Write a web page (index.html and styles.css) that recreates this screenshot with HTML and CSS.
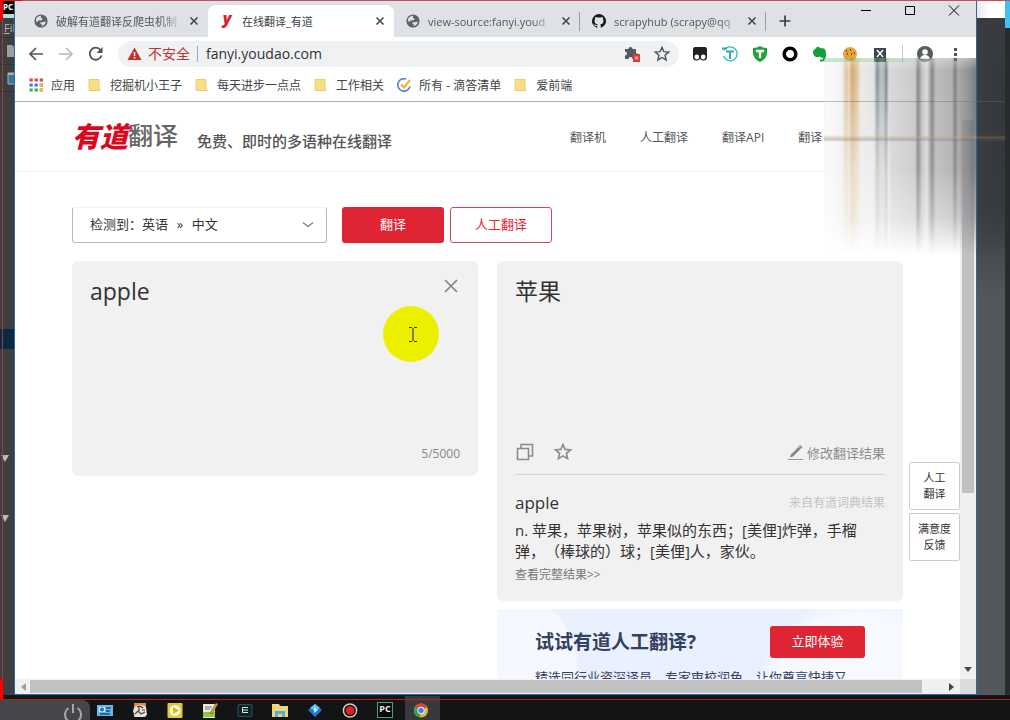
FILE: index.html
```html
<!DOCTYPE html>
<html lang="zh-CN">
<head>
<meta charset="utf-8">
<title>在线翻译_有道</title>
<link rel="stylesheet" href="styles.css">
</head>
<body>
<svg class="defs" width="0" height="0" aria-hidden="true">
  <symbol id="globe" viewBox="0 0 14 14"><circle cx="7" cy="7" r="6.6" fill="#5f6368"/><path d="M2 5.2C3 2.800 5 1.800 7 1.800L6.800 3.800 8.800 4.800 7.200 6.600 4.600 6.200 3.800 8 2.200 7.200ZM8.200 8.200 11.800 7.400C11.600 9.800 10 11.600 7.600 12.100L7.800 10.300 6.200 9.600 6.600 8.200Z" fill="#dee1e6"/></symbol>
  <symbol id="close" viewBox="0 0 10 10"><path d="M1.500 1.500 8.500 8.500M8.500 1.500 1.500 8.500" stroke="currentColor" stroke-width="1.600" fill="none"/></symbol>
  <symbol id="star" viewBox="0 0 18 18"><path d="M9 1.500 11.100 6.400 16.500 6.900 12.400 10.400 13.600 15.700 9 12.900 4.400 15.700 5.600 10.400 1.500 6.900 6.900 6.400Z" fill="none" stroke="currentColor" stroke-width="1.600"/></symbol>
  <symbol id="folder" viewBox="0 0 14 14"><path d="M1 1h10v10h1v2H1Z" fill="#f8df82"/><path d="M1 1.500h10v8.500l1 .5v2H1Z" fill="none" stroke="#e3c768" stroke-width=".8"/></symbol>
</svg>

<div class="desktop">
  <aside class="ide ide-left">
    <div class="ide-badge">PC</div>
    <div class="ide-menu"><u>F</u>il</div>
    <div class="ide-tool"><svg width="10" height="13" viewBox="0 0 10 13"><path d="M0 0h5l4 4v8H0Z" fill="#9b9fa2"/></svg></div>
    <div class="ide-tool"><svg width="9" height="13" viewBox="0 0 9 13"><path d="M1 1h8v11H1Z" fill="#35779a" stroke="#a7b0b5"/><path d="M1 1h8v2H1Z" fill="#a7b0b5"/></svg></div>
    <div class="ide-tree">
      <div class="ide-selected"></div>
      <i class="ide-arrow"></i>
      <i class="ide-arrow"></i>
    </div>
  </aside>

  <div class="browser">
    <header class="tabs">
      <div class="tab"><svg class="favicon"><use href="#globe"/></svg><span class="tab-title">破解有道翻译反爬虫机制</span><button class="tab-close" aria-label="关闭"><svg><use href="#close"/></svg></button></div>
      <div class="tab active"><span class="favicon y-icon">y</span><span class="tab-title">在线翻译_有道</span><button class="tab-close" aria-label="关闭"><svg><use href="#close"/></svg></button></div>
      <div class="tab divided"><svg class="favicon"><use href="#globe"/></svg><span class="tab-title">view-source:fanyi.youd</span><button class="tab-close" aria-label="关闭"><svg><use href="#close"/></svg></button></div>
      <div class="tab divided"><svg class="favicon" viewBox="0 0 16 16"><path fill="#17191c" d="M8 0a8 8 0 0 0-2.530 15.590c.4.070.55-.17.55-.38v-1.490c-2.230.490-2.690-.950-2.690-.950-.360-.920-.890-1.170-.890-1.170-.730-.5.050-.490.050-.490.810.060 1.230.830 1.230.830.720 1.230 1.880.870 2.340.670.070-.520.280-.870.510-1.070-1.780-.2-3.640-.890-3.640-3.950 0-.870.310-1.590.820-2.150-.080-.2-.360-1.020.080-2.120 0 0 .670-.210 2.200.820a7.600 7.600 0 0 1 4 0c1.530-1.040 2.200-.820 2.200-.820.440 1.100.160 1.920.080 2.120.510.560.820 1.270.820 2.150 0 3.070-1.870 3.750-3.650 3.950.290.250.540.730.540 1.480v2.190c0 .210.150.460.550.380A8 8 0 0 0 8 0Z"/></svg><span class="tab-title">scrapyhub (scrapy@qq</span><button class="tab-close" aria-label="关闭"><svg><use href="#close"/></svg></button></div>
      <button class="new-tab" aria-label="新标签页"><svg width="12" height="12" viewBox="0 0 12 12"><path d="M6 .5v11M.5 6h11" stroke="#3c4043" stroke-width="1.700"/></svg></button>
      <div class="window-buttons">
        <button aria-label="最小化"><svg width="12" height="12" viewBox="0 0 12 12"><path d="M1 5.500h10" stroke="#000"/></svg></button>
        <button aria-label="最大化"><svg width="12" height="12" viewBox="0 0 12 12"><path d="M1.500 1.500h9v8h-9Z" stroke="#000" fill="none"/></svg></button>
        <button aria-label="关闭"><svg width="12" height="12" viewBox="0 0 12 12"><path d="M1 .5l10 10M11 .5l-10 10" stroke="#000"/></svg></button>
      </div>
    </header>

    <div class="toolbar">
      <div class="nav-buttons">
        <button aria-label="后退"><svg width="16" height="16" viewBox="0 0 16 16"><path d="M15 8H2M8 2 2 8l6 6" stroke="#50545a" stroke-width="1.700" fill="none"/></svg></button>
        <button aria-label="前进"><svg width="16" height="16" viewBox="0 0 16 16"><path d="M1 8h13M8 2l6 6-6 6" stroke="#b9bbbe" stroke-width="1.700" fill="none"/></svg></button>
        <button aria-label="重新加载"><svg width="16" height="16" viewBox="0 0 16 16"><path d="M13.500 9.500A6 6 0 1 1 12.500 4" stroke="#50545a" stroke-width="1.800" fill="none"/><path d="M14.500 1v6h-6Z" fill="#50545a"/></svg></button>
      </div>
      <div class="omnibox">
        <svg width="15" height="14" viewBox="0 0 15 14"><path d="M7.500 .5 14.500 13H.5Z" fill="#c5302a"/><path d="M7.500 5v4M7.500 10v1.500" stroke="#fff" stroke-width="1.500"/></svg>
        <span class="insecure">不安全</span>
        <input class="url" aria-label="网址" value="fanyi.youdao.com">
        <svg width="16" height="17" viewBox="0 0 16 17"><path d="M1 4h3.500a2 2 0 1 1 4 0H12v4a2 2 0 1 1 0 4v2H8.500a2 2 0 0 0-4 0H1v-3.500a2 2 0 0 0 0-4Z" fill="#55595f"/><rect x="9" y="9" width="7" height="8" fill="#d83a35"/><path d="m11 11.500 3 3m0-3-3 3" stroke="#fff"/></svg>
        <svg class="omni-star"><use href="#star"/></svg>
      </div>
      <div class="extensions">
        <svg viewBox="0 0 16 16"><path d="M3 1h10q2 0 2 2v8H1V3q0-2 2-2Z" fill="#222"/><circle cx="4.600" cy="11" r="3.600" fill="#222"/><circle cx="11.400" cy="11" r="3.600" fill="#222"/><circle cx="4.800" cy="11" r="2.400" fill="#fff"/><circle cx="11.200" cy="11" r="2.400" fill="#fff"/></svg>
        <svg viewBox="0 0 16 16"><path d="M2 4.500A7 7 0 1 1 1.500 10" fill="none" stroke="#35b9bd" stroke-width="1.300"/><path d="M0 2.500h5M4 5.500h8M8 5.500V13" stroke="#24aeb5" stroke-width="2"/></svg>
        <svg viewBox="0 0 16 16"><path d="M1 2q4 0 7-2 3 2 7 2v6q-1 5-7 8-6-3-7-8Z" fill="#1fa33a"/><path d="M4 5h8M8 5v7" stroke="#fff" stroke-width="2.400"/></svg>
        <svg viewBox="0 0 16 16"><circle cx="8" cy="8" r="5.800" fill="#fff" stroke="#000" stroke-width="3.600"/></svg>
        <svg viewBox="0 0 16 16"><path d="M1 5 5 1q2-1 3 1l4 .5q2 1 2 6 0 6-3 7H8v-2h3v-2q-2 1-3-1-4 2-6-1Q.5 7 1 5Z" fill="#12a139"/></svg>
        <svg viewBox="0 0 16 16"><circle cx="8" cy="8" r="7" fill="#e8a13b"/><path d="M4 5h1m3-1h1m3 3h1M5 8h1m3 0h1" stroke="#5a3310" stroke-width="1.600"/></svg>
        <svg viewBox="0 0 16 16"><rect x="2" y="2" width="12" height="14" fill="#38464d"/><path d="m5 4 6 7m0-7-6 7" stroke="#fff" stroke-width="1.500"/></svg>
        <i class="ext-line"></i>
        <svg viewBox="0 0 16 16"><circle cx="8" cy="8" r="8" fill="#595b60"/><circle cx="8" cy="6" r="2.800" fill="#fff"/><path d="M3 13q1-4 5-4t5 4Z" fill="#fff"/></svg>
        <svg viewBox="0 0 16 16"><path d="M7 2h3v3H7Zm0 5h3v3H7Zm0 5h3v3H7Z" fill="#505358"/></svg>
      </div>
    </div>

    <nav class="bookmarks">
      <a href="#"><svg viewBox="0 0 14 14"><g stroke-width="3.200" stroke-dasharray="3.200 1.900"><path d="M.5 2h14" stroke="#d9433b"/><path d="M.5 7h14" stroke="#4279d4"/><path d="M.5 12h14" stroke="#3ba55a"/></g><path d="M10.700 5.400h3.200v3.200h-3.200Zm0 5h3.200v3.200h-3.200Z" fill="#f0b935"/></svg>应用</a>
      <a href="#"><svg><use href="#folder"/></svg>挖掘机小王子</a>
      <a href="#"><svg><use href="#folder"/></svg>每天进步一点点</a>
      <a href="#"><svg><use href="#folder"/></svg>工作相关</a>
      <a href="#"><svg viewBox="0 0 14 14"><path d="M9 1A6.200 6.200 0 1 0 13 8.500" stroke="#5b7fe0" stroke-width="1.700" fill="none"/><path d="m4 6.500 3 3L13 2" stroke="#f4b52f" stroke-width="2.200" fill="none"/></svg>所有 - 滴答清单</a>
      <a href="#"><svg><use href="#folder"/></svg>爱前端</a>
    </nav>

    <div class="viewport">
      <div class="page">
        <header class="site-header">
          <a class="logo" href="#"><span class="logo-brush">有道</span><span class="logo-text">翻译</span></a>
          <span class="tagline">免费、即时的多语种在线翻译</span>
          <nav class="site-nav"><a href="#">翻译机</a><a href="#">人工翻译</a><a href="#">翻译API</a><a href="#">翻译</a></nav>
        </header>
        <main class="translator">
          <div class="controls">
            <div class="language">
              <select aria-label="语言"><option>检测到：英语&ensp;&thinsp;»&ensp;&thinsp;中文</option></select>
              <svg width="12" height="8" viewBox="0 0 12 8"><path d="m1 1.500 5 4 5-4" fill="none" stroke="#777" stroke-width="1.200"/></svg>
            </div>
            <button class="btn primary">翻译</button>
            <button class="btn outline">人工翻译</button>
          </div>
          <div class="columns">
            <section class="source">
              <textarea aria-label="原文">apple</textarea>
              <button class="clear" aria-label="清空"><svg width="14" height="14" viewBox="0 0 14 14"><path d="m1 1 12 12M13 1 1 13" stroke="#858585" stroke-width="1.700"/></svg></button>
              <span class="count">5/5000</span>
            </section>
            <div class="output">
              <section class="result">
                <div class="translation">
                  <p class="translated">苹果</p>
                  <div class="actions">
                    <button aria-label="复制"><svg width="18" height="18" viewBox="0 0 18 18"><path d="M1.500 5.500h11v11h-11ZM5 5V1.500h11.500V13H13" fill="none" stroke="#8c8c8c" stroke-width="1.600"/></svg></button>
                    <button aria-label="收藏"><svg width="18" height="18"><use href="#star"/></svg></button>
                    <button class="edit"><svg width="15" height="15" viewBox="0 0 15 15"><path d="M3 9.500 10.500 2l2 2L5 11.500l-3 1Z" fill="#858585"/><path d="m11 1.500 1-1 2 2-1 1ZM0 14.500h15" fill="#858585" stroke="#858585" stroke-width=".8"/></svg>修改翻译结果</button>
                  </div>
                </div>
                <div class="dictionary">
                  <div class="entry"><h2>apple</h2><span>来自有道词典结果</span></div>
                  <p>n. 苹果，苹果树，苹果似的东西；[美俚]炸弹，手榴弹，（棒球的）球；[美俚]人，家伙。</p>
                  <a href="#">查看完整结果&gt;&gt;</a>
                </div>
              </section>
              <section class="promo">
                <div class="promo-head"><h2>试试有道人工翻译?</h2><button class="btn primary">立即体验</button></div>
                <p>精选同行业资深译员，专家审校润色，让你尊享快捷又</p>
              </section>
            </div>
          </div>
        </main>
        <div class="side-buttons"><button>人工<br>翻译</button><button>满意度<br>反馈</button></div>
      </div>
      <div class="vscroll"><i class="vthumb"></i><svg width="8" height="5"><path d="M0 0h8L4 5Z" fill="#4c4c4c"/></svg></div>
      <div class="hscroll"><svg width="5" height="8"><path d="M5 0v8L0 4Z" fill="#9c9c9c"/></svg><i class="hthumb"></i><svg width="5" height="8"><path d="M0 0v8l5-4Z" fill="#444"/></svg></div>
      <div class="corner"></div>
    </div>
  </div>

  <aside class="ide ide-right"></aside>
  <div class="smear"></div>
  <svg class="pointer" width="56" height="56" viewBox="0 0 56 56"><circle cx="28" cy="28" r="28" fill="#ecf000"/><path d="M26 21.500h3m2 0h3M26 35.500h3m2 0h3M30 22v13" stroke="#333" fill="none" stroke-width="1.200"/></svg>
</div>

<footer class="taskbar">
  <div class="power"><svg width="20" height="18" viewBox="0 0 20 18"><path d="M5.500 4a8 8 0 1 0 9 0M10 0v9" fill="none" stroke="#a5a7a9" stroke-width="2"/></svg></div>
  <div class="apps">
    <span><svg viewBox="0 0 16 16"><path d="M0 3h16v11H0Z" fill="#65b8e8"/><path d="M2 5h6v5H2Z" fill="#cfeafa"/><circle cx="5" cy="7.500" r="2" fill="#256fae"/><path d="M9 6h5M9 9h4M3 12h10" stroke="#164f82" stroke-width="1.500"/></svg></span>
    <span><svg viewBox="0 0 16 16"><path d="M2 1h12v14H2Z" fill="#e4853a"/><path d="M1 9q1-5 5-6t8 2l1 8-4 2H3Z" fill="#e9e2dc"/><path d="M5 5q3-2 6 1M3 12l3-3 3 3 4-2M7 5v4M10 8h3" fill="none" stroke="#4c4440" stroke-width="1.200"/></svg></span>
    <span><svg viewBox="0 0 16 16"><rect x=".5" y="1" width="15" height="15" rx="1" fill="#e3c83b"/><circle cx="8" cy="8.500" r="5.500" fill="#fff8d2"/><path d="m6 5 6 3.500L6 12Z" fill="#d9b81f"/></svg></span>
    <span><svg viewBox="0 0 16 16"><path d="M1 2h12v14H1Z" fill="#e8ebdc"/><path d="M3 5h7M3 7h5" stroke="#777"/><path d="M1 10h12v5H1Z" fill="#8ac83c"/><path d="m8 11 6-10 2 1-6 10Z" fill="#dca332" stroke="#544329" stroke-width=".5"/></svg></span>
    <span><svg viewBox="0 0 16 16"><rect x="1" y="2.500" width="14" height="12" rx="1" fill="#0e2227" stroke="#28545c"/><path d="M11 5.500H5.500v5H11M6 8h5" stroke="#dfe8e9" fill="none"/></svg></span>
    <span><svg viewBox="0 0 16 16"><path d="M0 2h7l1 2h8v11H0Z" fill="#f5d477"/><path d="M3 15V9h10v6h-3v-3H6v3Z" fill="#49b5db"/></svg></span>
    <span><svg viewBox="0 0 16 16"><path d="m8 2 7 6-7 7-7-7Z" fill="#2576cf"/><path d="m8 2 5 4-5 3-5-3Z" fill="#5fc8f3"/><path d="m7 5 4 3-4 3Z" fill="#c4f0ff"/></svg></span>
    <span><svg viewBox="0 0 16 16"><circle cx="8" cy="8.500" r="6.600" fill="#241010" stroke="#cfcfcf" stroke-width="1.500"/><circle cx="8" cy="8.500" r="4.300" fill="#e02020"/></svg></span>
    <span><b class="pc">PC</b></span>
    <span class="running"><svg viewBox="0 0 16 16"><circle cx="8" cy="8.500" r="7" fill="#e2b93a"/><path d="M8 8.500 2 5a7 7 0 0 1 12 0Z" fill="#db4437"/><path d="M8 8.500 2 5a7 7 0 0 0 5 10.400Z" fill="#2fa156"/><circle cx="8" cy="8.500" r="3.300" fill="#3d82e8" stroke="#fff"/></svg></span>
  </div>
</footer>
<div class="record-frame"></div>
</body>
</html>
```
FILE: styles.css
```css
* { box-sizing: border-box; }
body {
  margin: 0;
  height: 100vh;
  display: flex;
  flex-direction: column;
  overflow: hidden;
  position: relative;
  font-family: "Open Sans", "Noto Sans CJK SC", sans-serif;
  font-size: 12px;
  color: #333;
  background: #131416;
}
.defs { position: absolute; }
button { font: inherit; color: inherit; border: 0; padding: 0; background: none; }
button, svg { flex: none; }
svg { display: block; }
a { color: inherit; text-decoration: none; }
h2, p { margin: 0; }

.desktop {
  flex: 1;
  min-height: 0;
  display: grid;
  grid-template-columns: 14px 1fr 33px;
  grid-template-rows: minmax(0, 1fr);
  position: relative;
}
.ide { background: #3c3e40; overflow: hidden; }
.ide-left { display: flex; flex-direction: column; }
.ide-badge { height: 18px; background: #050505; border-bottom: 4px solid #b4ded6; color: #fff; font-weight: bold; font-size: 8px; line-height: 13px; padding-left: 3px; }
.ide-menu { height: 20px; color: #b5b8ba; font-size: 11px; padding-left: 4px; line-height: 20px; border-bottom: 1px solid #303234; }
.ide-tool { height: 27px; padding: 7px 0 0 7px; border-bottom: 1px solid #303234; }
.ide-tree { flex: 1; display: flex; flex-direction: column; }
.ide-selected { margin-top: 237px; height: 20px; background: #0c2942; }
.ide-arrow { width: 8px; margin: 106px 0 0 1px; border: 4px solid transparent; border-top: 7px solid #b9b9b9; border-bottom: 0; }
.ide-arrow + .ide-arrow { margin-top: 53px; }
.ide-right {
  background:
    linear-gradient(90deg, transparent 28px, #3fc0ee 28px) 0 0 / 100% 28px no-repeat,
    linear-gradient(90deg, #e8e8e8, #fff 12px) 0 0 / 28px 18px no-repeat,
    linear-gradient(90deg, transparent 28px, #292c2f 28px),
    linear-gradient(#393b3e 0 200px, #54585a 300px);
}

.browser {
  min-width: 0;
  display: flex;
  flex-direction: column;
  background: #fff;
  border: 1px solid #286a9b;
  border-top: 0;
}
.tabs { height: 37px; display: flex; background: #dee1e6; padding: 5px 0 0 7px; }
.tab { width: 186px; display: flex; align-items: center; padding: 0 9px 0 12px; border-radius: 8px 8px 0 0; color: #55585c; font-size: 11px; }
.tab.active { background: #fff; color: #3c4043; }
.tab.divided { background: linear-gradient(#9a9da1, #9a9da1) 100% 50% / 1px 19px no-repeat; }
.favicon { width: 14px; height: 14px; margin-right: 8px; flex: none; }
.y-icon { color: #d6232c; font: italic 800 16px/9px "Open Sans", sans-serif; text-align: center; }
.tab-title { flex: 1; min-width: 0; overflow: hidden; white-space: nowrap; mask-image: linear-gradient(90deg, #000 82%, transparent); }
.active .tab-title { mask-image: none; }
.tab-close { width: 10px; height: 10px; margin-left: 6px; color: #44474b; }
.tab-close svg { width: 10px; height: 10px; }
.new-tab { margin-left: 13px; }
.window-buttons { display: flex; margin-left: auto; padding-right: 16px; gap: 32px; height: 12px; }

.toolbar { height: 33px; display: flex; align-items: center; padding-right: 13px; }
.nav-buttons { display: flex; gap: 14px; padding: 0 14px 0 13px; }
.omnibox { flex: 1; min-width: 0; height: 26px; display: flex; align-items: center; padding: 0 9px; border-radius: 13px; background: #f0f1f3; }
.insecure { font-size: 14px; color: #bd352e; margin-left: 6px; padding-right: 7px; border-right: 1px solid #a5a7aa; line-height: 16px; }
.url { flex: 1; min-width: 0; border: 0; background: none; font: inherit; font-size: 14px; color: #303236; padding: 0 8px; outline: 0; }
.omni-star { width: 16px; height: 16px; margin-left: 14px; color: #50545a; }
.extensions { display: flex; align-items: center; gap: 14px; margin-left: 13px; }
.extensions svg { width: 16px; height: 16px; }
.ext-line { width: 1px; height: 18px; background: #c8c9cb; }

.bookmarks { height: 32px; display: flex; align-items: center; gap: 13px; padding: 0 0 2px 14px; border-bottom: 1px solid #aaadae; }
.bookmarks a { display: flex; align-items: center; gap: 8px; white-space: nowrap; color: #404347; }
.bookmarks svg { width: 14px; height: 14px; }

.viewport { flex: 1; min-height: 0; display: grid; grid-template: minmax(0, 1fr) 15px / minmax(0, 1fr) 16px; }
.page { overflow: hidden; position: relative; background: #fff; }
.site-header { height: 70px; display: flex; align-items: center; padding: 0 57px; border-bottom: 1px solid #f0f0f0; white-space: nowrap; }
.logo { display: flex; align-items: center; padding-bottom: 3px; }
.logo-brush { font-family: "Noto Sans CJK SC", sans-serif; font-size: 28px; font-weight: 900; font-style: italic; color: #db071d; line-height: 36px; }
.logo-text { font-size: 25px; color: #666; line-height: 36px; font-weight: 500; }
.tagline { margin-left: 19px; padding-top: 8px; font-size: 15px; font-weight: 500; color: #555; }
.site-nav { display: flex; gap: 34px; margin-left: 178px; color: #555; }

.translator { padding: 35px 57px 0; }
.controls { display: flex; gap: 6px; }
.language { width: 255px; height: 36px; margin-right: 9px; display: grid; align-items: center; border: 1px solid #bbb; border-top-color: #f2f2f2; border-radius: 3px; }
.language select { grid-area: 1 / 1; width: 100%; height: 100%; appearance: none; border: 0; padding: 0 17px 2px; font: inherit; font-size: 13px; color: #333; background: none; }
.language svg { grid-area: 1 / 1; justify-self: end; margin-right: 12px; }
.btn { width: 102px; height: 36px; padding-bottom: 3px; border-radius: 3px; font-size: 13px; }
.primary { background: #df2534; color: #fff; }
.outline { border: 1px solid #d54a59; color: #df2534; background: #fff; }
.columns { display: grid; grid-template-columns: 1fr 1fr; gap: 19px; padding-top: 18px; align-items: start; }
.source, .result { background: #f1f1f1; border-radius: 6px; }
.source { height: 215px; display: grid; grid-template: 1fr auto / 1fr auto; padding: 14px 18px 12px; }
.source textarea { width: 100%; height: 100%; border: 0; padding: 0; resize: none; outline: 0; background: none; font: inherit; font-size: 23px; line-height: 32px; color: #333; }
.clear { align-self: start; margin: 4px 2px 0 0; }
.count { grid-column: 1 / 3; justify-self: end; color: #888; line-height: 20px; }
.output { display: grid; gap: 8px; }
.result { padding: 14px 18px 17px; }
.translation { height: 200px; display: flex; flex-direction: column; justify-content: space-between; border-bottom: 1px solid #d5d5d5; padding-bottom: 13px; }
.translated { font-size: 23px; line-height: 32px; }
.actions { display: flex; align-items: center; gap: 20px; height: 18px; padding-left: 1px; color: #8c8c8c; }
.edit { display: flex; align-items: center; gap: 4px; margin-left: auto; font-size: 13px; }
.entry { display: flex; justify-content: space-between; align-items: center; height: 26px; margin-top: 14px; margin-bottom: 5px; }
.entry h2 { font-size: 17px; font-weight: 400; }
.entry span { color: #c4c4c4; }
.dictionary p { padding-right: 12px; font-size: 15px; line-height: 21px; text-spacing-trim: space-all; }
.dictionary a { display: block; margin-top: 4px; line-height: 18px; color: #777; }
.promo { padding: 17px 38px; background: radial-gradient(circle at 0 60px, #f5f8fe 80px, transparent 81px), radial-gradient(circle at 90% 100%, #f6f9ff 90px, transparent 110px), #e9f0fe; color: #33415f; }
.promo-head { display: flex; justify-content: space-between; align-items: center; }
.promo h2 { font-size: 19px; line-height: 32px; font-weight: 700; }
.promo .btn { width: 95px; height: 32px; }
.promo p { margin-top: 9px; font-size: 13px; line-height: 20px; white-space: nowrap; }
.side-buttons { position: absolute; right: 0; top: 360px; display: grid; gap: 3px; }
.side-buttons button { width: 51px; height: 48px; border: 1px solid #ccc; border-radius: 2px; background: #fff; font-size: 11px; line-height: 16px; }

.vscroll { background: #f0f0f0; display: flex; flex-direction: column; align-items: center; justify-content: space-between; padding: 18px 2px 7px; }
.vthumb { width: 12px; height: 67.5%; background: #c1c1c1; }
.hscroll { background: #f0f0f0; display: flex; align-items: center; gap: 4px; padding: 0 6px; }
.hthumb { flex: 1; height: 13px; margin-right: 23px; background: #c1c1c1; }
.corner { background: #dcdcdc; }

.smear {
  position: absolute;
  right: 5px;
  top: 58px;
  width: 181px;
  height: 197px;
  background:
    linear-gradient(90deg, #0fa03a66, #0fa03a44 70px, transparent 110px) 0 0 / 100% 4px no-repeat,
    linear-gradient(transparent, #b8884f66, #5556, transparent) 0 77px / 100% 7px no-repeat,
    linear-gradient(#7776, #7776) 0 43px / 100% 1px no-repeat,
    linear-gradient(transparent 20px, #eeeeef99 110px) 18px 0 / 48px 100% no-repeat,
    linear-gradient(90deg, #f0f8f1 0, #f8f8f8 5px, #eee 18px, #d6b587 22px, #e5ccab 25px, #c8944d 28px, #dbb582 33px, #e6e4e1 37px, #dadadc 50px, #68757b 53px, #a6b0b4 57px, #9ba5a8 60px, #5b6267 62px, #cfcfd1 65px, #bdbdc0 91px, #67686b 94px, #b5b5b8 98px, #d1d1d3 103px, #67686b 108px, #acacaf 112px, #9c9c9f 128px, #5d5e61 131px, #929296 134px, #77777b 145px, #5d5e63 151px, #26699b 152px, #3a3d41 154px, #34373b 181px);
  mask-image: linear-gradient(#0008, #000c 12px, #000b 110px, #0007 160px, transparent);
}
.pointer { position: absolute; left: 383px; top: 306px; }

.taskbar { height: 25px; flex: none; display: flex; background: #131416; border-top: 1px solid #071d2a; }
.power { width: 90px; height: 21px; margin-top: 4px; padding: 4px 0 0 63px; background: #44464a; border-radius: 0 8px 0 0; overflow: hidden; }
.apps { display: flex; }
.apps span { width: 35px; height: 24px; display: grid; place-items: center; padding: 4px 5px 0 0; }
.apps svg { width: 16px; height: 16px; }
.apps .running { background: #37393b; padding-right: 3px; }
.pc { width: 16px; height: 16px; border: 1px solid #39a77c; background: #080808; color: #eee; font-size: 9px; line-height: 11px; text-align: center; }
.record-frame {
  position: absolute;
  inset: 0 0 20px 0;
  pointer-events: none;
  background:
    linear-gradient(#f00, #f00) 0 0 / 3px 20px no-repeat,
    linear-gradient(#f00, #f00) 0 0 / 22px 1px no-repeat,
    linear-gradient(#f00, #f00) 0 100% / 3px 21px no-repeat,
    linear-gradient(#c0525a, #c0525a) 0 0 / 100% 1px no-repeat,
    linear-gradient(#b1211f, #b1211f) 0 100% / 100% 1px no-repeat,
    linear-gradient(#a33a3c, #a33a3c) 2px 0 / 1px 100% no-repeat;
}
```
